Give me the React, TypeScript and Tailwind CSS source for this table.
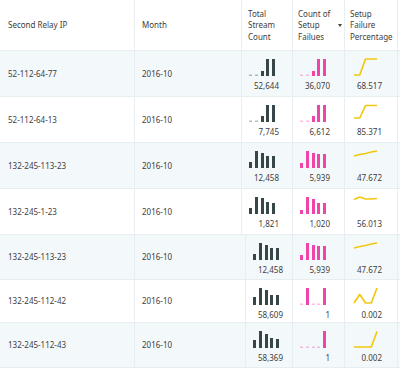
import React from "react";

interface Row {
  ip: string;
  month: string;
  total: string;
  fails: string;
  pct: string;
  totalBars: number[];
  failBars: number[];
  line: number[];
  shifted?: boolean;
}

const rows: Row[] = [
  { ip: "52-112-64-77", month: "2016-10", total: "52,644", fails: "36,070", pct: "68.517", totalBars: [0, 0, 0.3, 1, 1], failBars: [0, 0, 0.3, 1, 1], line: [17, 17, 1, 1, 1] },
  { ip: "52-112-64-13", month: "2016-10", total: "7,745", fails: "6,612", pct: "85.371", totalBars: [0, 0, 0.33, 1, 1], failBars: [0, 0, 0.33, 1, 1], line: [14, 14, 1.5, 1.5, 1.5] },
  { ip: "132-245-113-23", month: "2016-10", total: "12,458", fails: "5,939", pct: "47.672", totalBars: [0.35, 1, 0.88, 0.7, 0.7], failBars: [0.28, 1, 0.88, 0.8, 0.8], line: [6, 4.5, 3.5, 2, 1] },
  { ip: "132-245-1-23", month: "2016-10", total: "1,821", fails: "1,020", pct: "56.013", totalBars: [0.33, 1, 0.93, 0.68, 0.65], failBars: [0.23, 1, 0.87, 0.62, 0.62], line: [3.5, 1, 3, 3, 2.5] },
  { ip: "132-245-113-23", month: "2016-10", total: "12,458", fails: "5,939", pct: "47.672", totalBars: [0.35, 1, 0.88, 0.7, 0.7], failBars: [0.28, 1, 0.88, 0.8, 0.8], line: [6, 4.5, 3.5, 2, 1], shifted: true },
  { ip: "132-245-112-42", month: "2016-10", total: "58,609", fails: "1", pct: "0.002", totalBars: [0.47, 1, 0.88, 0.6, 0.6], failBars: [0, 1, 0, 0, 1], line: [16, 7.5, 16, 16, 1], shifted: true },
  { ip: "132-245-112-43", month: "2016-10", total: "58,369", fails: "1", pct: "0.002", totalBars: [0.5, 1, 0.85, 0.6, 0.55], failBars: [0, 0, 0, 0, 1], line: [17, 17, 17, 17, 1.5], shifted: true },
];

const heights = ["h-[46px]", "h-[46px]", "h-[46px]", "h-[46px]", "h-[45px]", "h-[43px]", "h-[45px]"];

const BAR_X = [1, 7, 13, 18, 24];

function Bars({ values, color }: { values: number[]; color: string }) {
  return (
    <svg width="30" height="18" viewBox="0 0 30 18">
      {values.map((v, i) =>
        v === 0 ? (
          <rect key={i} x={BAR_X[i]} y={16.5} width={3} height={1.5} fill={color} opacity={0.35} />
        ) : (
          <rect key={i} x={BAR_X[i]} y={Math.round(18 - v * 17)} width={3} height={18 - Math.round(18 - v * 17)} fill={color} />
        )
      )}
    </svg>
  );
}

function Line({ ys }: { ys: number[] }) {
  const pts = ys.map((y, i) => `${3 + i * 5.75},${y}`).join(" ");
  return (
    <svg width="30" height="18" viewBox="0 0 30 18">
      <polyline points={pts} fill="none" stroke="#f2c80f" strokeWidth="1.7" strokeLinejoin="round" />
    </svg>
  );
}

function SparkCell({ children, value }: { children: React.ReactNode; value: string }) {
  return (
    <div className="border-r border-[#e6eef2] pl-[6px] pt-[7px]">
      <div className="w-[31px]">
        {children}
        <div className="mt-[4px] text-right leading-[12px] whitespace-nowrap">{value}</div>
      </div>
    </div>
  );
}

export default function App() {
  return (
    <div
      className="w-[400px] h-[370px] overflow-hidden bg-white text-[#404040] text-[8px]"
      style={{ fontFamily: '"Noto Sans", "Open Sans", sans-serif' }}
    >
      <div className="grid grid-cols-[135px_107px_51px_52px_53px] h-[51px] border-b border-[#e6eef2]">
        <div className="flex items-center pl-[8px] border-r border-[#e6eef2]">Second Relay IP</div>
        <div className="flex items-center pl-[7px] border-r border-[#e6eef2]">Month</div>
        <div className="flex items-center pl-[6px] border-r border-[#e6eef2] leading-[11.5px]">
          <div>
            Total
            <br />
            Stream
            <br />
            Count
          </div>
        </div>
        <div className="flex items-center pl-[5px] pr-[2px] border-r border-[#e6eef2] leading-[11.5px]">
          <div>
            Count of
            <br />
            Setup
            <br />
            Failues
          </div>
          <svg className="ml-auto" width="4" height="3" viewBox="0 0 4 3">
            <polygon points="0,0 4,0 2,3" fill="#444" />
          </svg>
        </div>
        <div className="flex items-center pl-[5px] border-r border-[#e6eef2] leading-[11.5px]">
          <div>
            Setup
            <br />
            Failure
            <br />
            Percentage
          </div>
        </div>
      </div>

      {rows.map((r, i) => (
        <div
          key={i}
          className={`grid ${
            r.shifted ? "grid-cols-[135px_111px_47px_52px_53px]" : "grid-cols-[135px_107px_51px_52px_53px]"
          } ${heights[i]} border-b border-[#e6eef2] ${i % 2 === 0 ? "bg-[#f3f8fb]" : "bg-white"}`}
        >
          <div className="flex items-center pl-[8px] border-r border-[#e6eef2]">{r.ip}</div>
          <div className="flex items-center pl-[7px] border-r border-[#e6eef2]">{r.month}</div>
          <SparkCell value={r.total}>
            <Bars values={r.totalBars} color="#374649" />
          </SparkCell>
          <SparkCell value={r.fails}>
            <Bars values={r.failBars} color="#ef45ab" />
          </SparkCell>
          <SparkCell value={r.pct}>
            <Line ys={r.line} />
          </SparkCell>
        </div>
      ))}
    </div>
  );
}
